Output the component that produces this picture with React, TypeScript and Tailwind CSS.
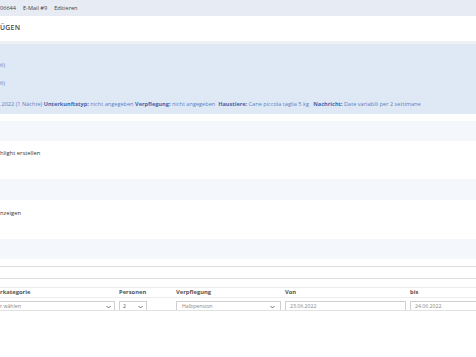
import React from 'react';

const Label: React.FC<{ children: React.ReactNode }> = ({ children }) => (
  <span className="font-bold text-[#3f64ad]">{children}</span>
);

const Chevron = () => (
  <svg width="5" height="4" viewBox="0 0 10 6" className="shrink-0">
    <path d="M1 1l4 4 4-4" fill="none" stroke="#555" strokeWidth="1.6" />
  </svg>
);

export default function App() {
  return (
    <div className="w-[476px] h-[357px] overflow-hidden bg-white font-['Open_Sans',sans-serif] text-[#444]">
      {/* breadcrumb bar */}
      <div className="h-[16px] bg-[#e7ebf3] flex items-center gap-[7px] text-[5.6px] text-[#444]">
        <span>06644</span>
        <span>E-Mail #9</span>
        <span>Editieren</span>
      </div>

      {/* title */}
      <div className="h-[25px] flex items-center text-[6.8px] font-semibold tracking-[0.3px] text-[#444]">
        ÜGEN
      </div>
      <div className="h-[3px] bg-[#f0f1f3]" />

      {/* request summary */}
      <div className="h-[70px] bg-[#dfe9f6] text-[5.6px] text-[#5b7fc2] flex flex-col">
        <div className="h-[19px]" />
        <div className="h-[18px] leading-[1]">6)</div>
        <div className="h-[21px] leading-[1]">6)</div>
        <div className="leading-[1] whitespace-nowrap">
          .2022 (1 Nächte) <Label>Unterkunftstyp:</Label> nicht angegeben <Label>Verpflegung:</Label> nicht angegeben&nbsp;&nbsp;
          <Label>Haustiere:</Label> Cane piccola taglia 5 kg&nbsp;&nbsp; <Label>Nachricht:</Label> Date variabili per 2 settimane
        </div>
      </div>

      <div className="h-[7px]" />
      <div className="h-[20px] bg-[#f4f7fb]" />
      <div className="h-[38px] pt-[10px] text-[5.8px] leading-[1] text-[#333]">hlight erstellen</div>
      <div className="h-[21px] bg-[#f4f7fb]" />
      <div className="h-[39px] pt-[11px] text-[5.8px] leading-[1] text-[#333]">nzeigen</div>
      <div className="h-[20px] bg-[#f4f7fb]" />

      <div className="h-[7px]" />
      <div className="h-[13px] border-y border-[#dcdcdc]" />
      <div className="h-[8px]" />

      {/* room form */}
      <div className="h-[24px] overflow-hidden border-b border-[#e2e2e2]">
        <div className="grid grid-cols-[119px_57px_109px_125px_1fr] h-[11px] border-y border-[#ececec] text-[5.8px] font-bold text-[#555] items-center">
          <span>rkategorie</span>
          <span>Personen</span>
          <span>Verpflegung</span>
          <span>Von</span>
          <span>bis</span>
        </div>
        <div className="grid grid-cols-[119px_57px_109px_125px_1fr] mt-[3px] text-[5.2px] text-[#888]">
          <div className="pr-[4px]">
            <div className="h-[11px] border border-[#cfcfcf] border-l-0 flex items-center justify-between pr-[3px]">
              <span>r wählen</span>
              <Chevron />
            </div>
          </div>
          <div>
            <div className="w-[28px] h-[11px] border border-[#cfcfcf] flex items-center justify-between px-[3px]">
              <span className="text-[#555]">2</span>
              <Chevron />
            </div>
          </div>
          <div className="pr-[4px]">
            <div className="h-[11px] border border-[#cfcfcf] flex items-center justify-between px-[5px]">
              <span>Halbpension</span>
              <Chevron />
            </div>
          </div>
          <div className="pr-[4px]">
            <div className="h-[11px] border border-[#cfcfcf] flex items-center px-[4px]">23.06.2022</div>
          </div>
          <div>
            <div className="h-[11px] border border-[#cfcfcf] border-r-0 flex items-center px-[4px]">24.06.2022</div>
          </div>
        </div>
      </div>
    </div>
  );
}
